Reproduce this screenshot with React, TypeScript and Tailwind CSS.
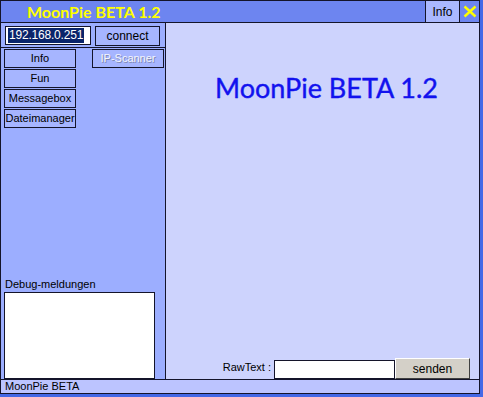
import React from 'react';

const sans = { fontFamily: '"Liberation Sans", Arial, sans-serif' };
const comic = { fontFamily: '"Comic Sans MS", Lato, "DejaVu Sans", sans-serif' };

function PanelButton({ label, disabled }: { label: string; disabled?: boolean }) {
  return (
    <div
      className={`h-[19px] w-[72px] border border-[#14142a] bg-[#a6b5ff] flex items-center justify-center text-[11px] leading-none ${
        disabled ? 'text-[#f4f6ff] [text-shadow:1px_1px_0_#8088b0]' : 'text-black'
      }`}
    >
      {label}
    </div>
  );
}

export default function App() {
  return (
    <div className="w-[483px] h-[397px] bg-[#4468e6]" style={sans}>
      <div className="w-[480px] h-[394px] border border-[#14142a] flex flex-col">
        {/* Title bar */}
        <div className="h-[22px] flex items-stretch bg-[#6d85f0] border-b border-[#14142a] shrink-0">
          <div className="flex-1 flex items-center pl-[26px]">
            <span className="text-[#ffff00] text-[16px] font-bold leading-none" style={comic}>
              MoonPie BETA 1.2
            </span>
          </div>
          <div className="w-[35px] border-l border-r border-[#14142a] bg-[#aab8ff] flex items-center justify-center text-[12px] text-black">
            Info
          </div>
          <div className="w-[19px] flex items-center justify-center">
            <svg width="14" height="13" viewBox="0 0 14 13">
              <path d="M1.5 1.5 L12.5 11.5 M12.5 1.5 L1.5 11.5" stroke="#ffff00" strokeWidth="2.4" fill="none" />
            </svg>
          </div>
        </div>

        {/* Body */}
        <div className="flex-1 flex min-h-0">
          {/* Left panel */}
          <div className="w-[165px] border-r border-[#14142a] bg-[#9caeff] flex flex-col shrink-0">
            <div className="h-[25px] border-b border-[#14142a] flex items-start pl-[4px] pt-[3px] gap-[4px] shrink-0">
              <div className="w-[86px] h-[19px] border border-[#14142a] bg-white flex items-center pl-[2px]">
                <span className="bg-[#0a246a] text-white text-[12px] leading-[15px] px-[1px] tracking-[-0.2px]">192.168.0.251</span>
              </div>
              <div className="w-[65px] h-[20px] border border-[#14142a] bg-[#a6b5ff] flex items-center justify-center text-[12px] text-black">
                connect
              </div>
            </div>
            <div className="flex-1 flex flex-col pl-[3px] pt-[1px]">
              <div className="flex gap-[16px]">
                <div className="flex flex-col gap-[1px]">
                  <PanelButton label="Info" />
                  <PanelButton label="Fun" />
                  <PanelButton label="Messagebox" />
                  <PanelButton label="Dateimanager" />
                </div>
                <PanelButton label="IP-Scanner" disabled />
              </div>
              <div className="mt-auto flex flex-col">
                <span className="text-[11px] leading-[13px] text-black pl-[1px]">Debug-meldungen</span>
                <div className="w-[151px] h-[87px] border border-[#14142a] bg-white mt-[1px]" />
              </div>
            </div>
          </div>

          {/* Right panel */}
          <div className="flex-1 bg-[#cdd3fd] flex flex-col">
            <div className="flex justify-center pt-[51px] pl-[8px]">
              <span className="text-[#1212ee] text-[27px] leading-none [-webkit-text-stroke:0.4px_#1212ee]" style={comic}>
                MoonPie BETA 1.2
              </span>
            </div>
            <div className="mt-auto flex items-end justify-end pr-[9px]">
              <span className="text-[11px] text-black mr-[3px] mb-[4px]">RawText :</span>
              <div className="w-[121px] h-[19px] border border-[#14142a] bg-white" />
              <div className="w-[75px] h-[21px] bg-[#d4d0c8] border border-t-white border-l-white border-r-[#404040] border-b-[#404040] flex items-center justify-center text-[12px] text-black">
                senden
              </div>
            </div>
          </div>
        </div>

        {/* Status bar */}
        <div className="h-[14px] border-t border-[#14142a] bg-[#bcc4ff] shrink-0 flex items-center pl-[4px] text-[11px] text-black leading-none">
          MoonPie BETA
        </div>
      </div>
    </div>
  );
}
